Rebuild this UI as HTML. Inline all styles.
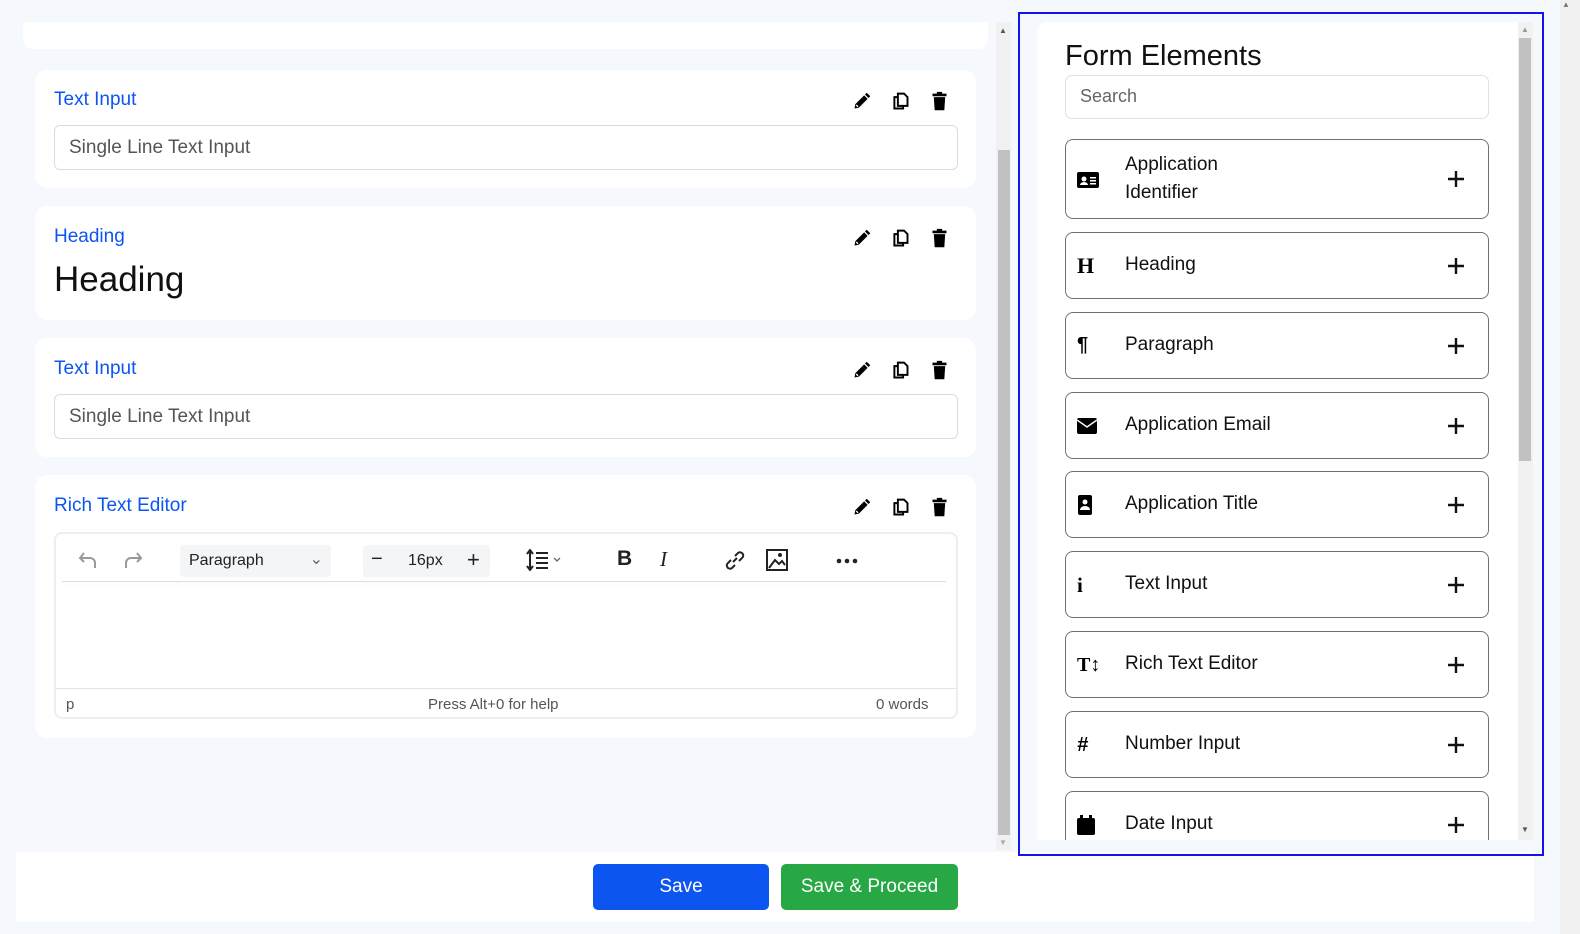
<!DOCTYPE html>
<html><head><meta charset="utf-8"><style>
*{box-sizing:border-box;margin:0;padding:0}
body{width:1580px;height:934px;background:#f5f8fc;font-family:"Liberation Sans",sans-serif;position:relative;overflow:hidden}
.abs{position:absolute}
.card{position:absolute;left:35px;width:941px;background:#fff;border-radius:12px}
.lbl{position:absolute;left:19px;color:#0d55f0;font-size:19px}
.inp{position:absolute;left:19px;width:904px;height:45px;border:1px solid #d9dbe0;border-radius:6px;font-size:19px;color:#555;padding:11px 14px}
.icons{position:absolute;right:26px;display:flex;gap:18px;align-items:center}
.icons svg{width:21px;height:21px}
.item{position:absolute;left:1065px;width:424px;border:1px solid #6c727a;border-radius:8px;background:#fff}
.item .t{position:absolute;left:59px;font-size:19px;color:#111;line-height:28px}
.item .ic{position:absolute;left:11px;width:24px;height:22px;display:flex;align-items:center}
.item .pl{position:absolute;right:24px;width:16px;height:16px}
.tb{font-size:16px;color:#222}
</style></head><body>
<div class="abs" style="left:23px;top:22px;width:965px;height:27px;background:#fff;border-radius:0 0 10px 10px"></div>

<div class="abs" style="left:996px;top:22px;width:15px;height:828px;background:#f1f1f1"></div>
<div class="abs" style="left:998px;top:150px;width:12px;height:685px;background:#c1c1c1"></div>
<div class="abs" style="left:999px;top:26px;font-size:8px;color:#555">▲</div>
<div class="abs" style="left:999px;top:838px;font-size:8px;color:#aaa">▼</div>

<svg width="0" height="0" style="position:absolute">
<defs>
<g id="pen"><path d="M4 20 L5 15 L15 5 L19 9 L9 19 Z" fill="#000"/><path d="M6 16 L8 18" stroke="#fff" stroke-width="1.5"/><path d="M16 4 L18 2 L22 6 L20 8Z" fill="#000"/></g>
<g id="copy"><path d="M9 3 h7 l4 4 v10 h-11z" fill="none" stroke="#000" stroke-width="2.2"/><path d="M9 7 h-4 v13 h10 v-3" fill="none" stroke="#000" stroke-width="2.2"/></g>
<g id="trash"><rect x="4" y="3" width="16" height="3" fill="#000"/><rect x="9" y="1" width="6" height="3" fill="#000"/><path d="M5.5 7 h13 l-1 15 h-11z" fill="#000"/></g>
<g id="plus"><path d="M8 0 V16 M0 8 H16" stroke="#111" stroke-width="2.4"/></g>
</defs></svg>

<div class="card" style="top:70px;height:118px">
  <div class="lbl" style="top:19px">Text Input</div>
  <div class="icons" style="top:21px"><svg viewBox="0 0 24 24"><use href="#pen"/></svg><svg viewBox="0 0 24 24"><use href="#copy"/></svg><svg viewBox="0 0 24 24"><use href="#trash"/></svg></div>
  <div class="inp" style="top:55px">Single Line Text Input</div>
</div>
<div class="card" style="top:206px;height:114px">
  <div class="lbl" style="top:20px">Heading</div>
  <div class="icons" style="top:22px"><svg viewBox="0 0 24 24"><use href="#pen"/></svg><svg viewBox="0 0 24 24"><use href="#copy"/></svg><svg viewBox="0 0 24 24"><use href="#trash"/></svg></div>
  <div class="abs" style="left:19px;top:54px;font-size:35px;color:#111">Heading</div>
</div>
<div class="card" style="top:338px;height:119px">
  <div class="lbl" style="top:20px">Text Input</div>
  <div class="icons" style="top:22px"><svg viewBox="0 0 24 24"><use href="#pen"/></svg><svg viewBox="0 0 24 24"><use href="#copy"/></svg><svg viewBox="0 0 24 24"><use href="#trash"/></svg></div>
  <div class="inp" style="top:56px">Single Line Text Input</div>
</div>
<div class="card" style="top:475px;height:263px">
  <div class="lbl" style="top:20px">Rich Text Editor</div>
  <div class="icons" style="top:22px"><svg viewBox="0 0 24 24"><use href="#pen"/></svg><svg viewBox="0 0 24 24"><use href="#copy"/></svg><svg viewBox="0 0 24 24"><use href="#trash"/></svg></div>
  <div class="abs" style="left:19px;top:57px;width:904px;height:187px;border:2px solid #eceef0;border-radius:8px">
    <div class="abs" style="left:6px;top:47px;width:884px;height:1px;background:#ddd;box-shadow:0 3px 6px rgba(0,0,0,.08)"></div>
    <svg class="abs" style="left:22px;top:15px" width="22" height="22" viewBox="0 0 22 22"><path d="M6 4 L2 9 L6 13 M2 9 H12 a5 5 0 0 1 5 5 v5" fill="none" stroke="#999" stroke-width="2"/></svg>
    <svg class="abs" style="left:65px;top:15px" width="22" height="22" viewBox="0 0 22 22"><path d="M16 4 L20 9 L16 13 M20 9 H10 a5 5 0 0 0 -5 5 v5" fill="none" stroke="#999" stroke-width="2"/></svg>
    <div class="abs tb" style="left:124px;top:11px;width:151px;height:32px;background:#f4f5f6;border-radius:4px;padding:7px 9px">Paragraph<span style="position:absolute;right:8px;top:4px;color:#666">⌄</span></div>
    <div class="abs tb" style="left:307px;top:11px;width:127px;height:32px;background:#f4f5f6;border-radius:4px"><span class="abs" style="left:8px;top:3px;font-size:20px">−</span><span class="abs" style="left:45px;top:7px">16px</span><span class="abs" style="left:104px;top:2px;font-size:22px">+</span></div>
    <svg class="abs" style="left:470px;top:15px" width="40" height="22" viewBox="0 0 40 22"><path d="M4 2 V20 M1 5 L4 1 L7 5 M1 17 L4 21 L7 17" fill="none" stroke="#222" stroke-width="2"/><path d="M10 4 H22 M10 9 H22 M10 14 H22 M10 19 H22" stroke="#222" stroke-width="2"/><path d="M28 9 L31 12 L34 9" fill="none" stroke="#666" stroke-width="1.3"/></svg>
    <div class="abs" style="left:561px;top:13px;font-size:21px;font-weight:bold;color:#222">B</div>
    <div class="abs" style="left:604px;top:13px;font-size:21px;font-style:italic;font-family:'Liberation Serif',serif;color:#222">I</div>
    <svg class="abs" style="left:668px;top:15px" width="22" height="24" viewBox="0 0 22 24"><path d="M9 13 L13 9 M7 11 L4 14 a3 3 0 0 0 4 5 L11 16 M15 12 L18 9 a3 3 0 0 0 -4 -5 L11 7" fill="none" stroke="#222" stroke-width="2"/></svg>
    <svg class="abs" style="left:710px;top:15px" width="22" height="22" viewBox="0 0 22 22"><rect x="1" y="1" width="20" height="20" fill="none" stroke="#222" stroke-width="2"/><path d="M3 19 L9 11 L13 15 L16 12 L19 16" fill="none" stroke="#222" stroke-width="2"/><circle cx="14" cy="6" r="2" fill="#222"/></svg>
    <svg class="abs" style="left:780px;top:24px" width="22" height="6" viewBox="0 0 22 6"><circle cx="3" cy="3" r="2.3" fill="#222"/><circle cx="11" cy="3" r="2.3" fill="#222"/><circle cx="19" cy="3" r="2.3" fill="#222"/></svg>
    <div class="abs" style="left:0;top:154px;width:900px;height:1px;background:#e2e3e5"></div>
    <div class="abs" style="left:10px;top:162px;font-size:15px;color:#555">p</div>
    <div class="abs" style="left:372px;top:162px;font-size:15px;color:#555">Press Alt+0 for help</div>
    <div class="abs" style="left:820px;top:162px;font-size:15px;color:#555">0 words</div>
  </div>
</div>

<div class="abs" style="left:16px;top:852px;width:1518px;height:70px;background:#fff"></div>
<div class="abs" style="left:593px;top:864px;width:176px;height:46px;background:#0d55f0;border-radius:5px;color:#fff;font-size:19px;text-align:center;line-height:46px">Save</div>
<div class="abs" style="left:781px;top:864px;width:177px;height:46px;background:#28a745;border-radius:5px;color:#fff;font-size:19px;text-align:center;line-height:46px">Save &amp; Proceed</div>

<div class="abs" style="left:1560px;top:0;width:20px;height:934px;background:#f1f1f1"></div>
<div class="abs" style="left:1562px;top:0;font-size:8px;color:#777">▲</div>

<div class="abs" style="left:1018px;top:12px;width:526px;height:844px;border:2px solid #1414ea"></div>
<div class="abs" style="left:1037px;top:22px;width:496px;height:818px;background:#fff;border-radius:10px 0 0 0;overflow:hidden">
  <div class="abs" style="left:481px;top:0;width:15px;height:818px;background:#f1f1f1"></div>
  <div class="abs" style="left:482px;top:16px;width:12px;height:423px;background:#c1c1c1"></div>
  <div class="abs" style="left:484px;top:3px;font-size:8px;color:#999">▲</div>
  <div class="abs" style="left:484px;top:803px;font-size:8px;color:#555">▼</div>
</div>
<div class="abs" style="left:1065px;top:40px;font-size:29px;color:#111">Form Elements</div>
<div class="abs" style="left:1065px;top:75px;width:424px;height:44px;border:1px solid #dfe1e4;border-radius:7px;font-size:18px;color:#666;padding:10px 14px">Search</div>

<div class="item" style="top:139px;height:80px"><div class="ic" style="top:29px"><svg width="22" height="18" viewBox="0 0 22 18"><rect x="0" y="1" width="22" height="16" rx="2" fill="#000"/><circle cx="7" cy="8" r="2.5" fill="#fff"/><path d="M3 14 a4 3 0 0 1 8 0z" fill="#fff"/><rect x="13" y="6" width="6" height="1.5" fill="#fff"/><rect x="13" y="9" width="6" height="1.5" fill="#fff"/><rect x="13" y="12" width="6" height="1.5" fill="#fff"/></svg></div><div class="t" style="top:11px">Application<br>Identifier</div><svg class="pl" style="top:31px" viewBox="0 0 16 16"><use href="#plus"/></svg></div>
<div class="item" style="top:232px;height:67px"><div class="ic" style="top:22px;font-family:'Liberation Serif',serif;font-weight:bold;font-size:22px">H</div><div class="t" style="top:18px">Heading</div><svg class="pl" style="top:25px" viewBox="0 0 16 16"><use href="#plus"/></svg></div>
<div class="item" style="top:312px;height:67px"><div class="ic" style="top:21px;font-weight:bold;font-size:20px">¶</div><div class="t" style="top:18px">Paragraph</div><svg class="pl" style="top:25px" viewBox="0 0 16 16"><use href="#plus"/></svg></div>
<div class="item" style="top:392px;height:67px"><div class="ic" style="top:22px"><svg width="20" height="16" viewBox="0 0 20 16"><rect x="0" y="0" width="20" height="16" rx="2" fill="#000"/><path d="M0 2 L10 9 L20 2" fill="none" stroke="#fff" stroke-width="1.5"/></svg></div><div class="t" style="top:18px">Application Email</div><svg class="pl" style="top:25px" viewBox="0 0 16 16"><use href="#plus"/></svg></div>
<div class="item" style="top:471px;height:67px"><div class="ic" style="top:22px"><svg width="16" height="20" viewBox="0 0 16 20"><rect x="1" y="0" width="14" height="20" rx="2" fill="#000"/><circle cx="8" cy="7" r="2.5" fill="#fff"/><path d="M3 15 a5 4 0 0 1 10 0z" fill="#fff"/></svg></div><div class="t" style="top:18px">Application Title</div><svg class="pl" style="top:25px" viewBox="0 0 16 16"><use href="#plus"/></svg></div>
<div class="item" style="top:551px;height:67px"><div class="ic" style="top:22px;font-family:'Liberation Serif',serif;font-weight:bold;font-size:21px">i</div><div class="t" style="top:18px">Text Input</div><svg class="pl" style="top:25px" viewBox="0 0 16 16"><use href="#plus"/></svg></div>
<div class="item" style="top:631px;height:67px"><div class="ic" style="top:22px;font-family:'Liberation Serif',serif;font-weight:bold;font-size:20px">T↕</div><div class="t" style="top:18px">Rich Text Editor</div><svg class="pl" style="top:25px" viewBox="0 0 16 16"><use href="#plus"/></svg></div>
<div class="item" style="top:711px;height:67px"><div class="ic" style="top:22px;font-weight:bold;font-size:20px;font-style:italic">#</div><div class="t" style="top:18px">Number Input</div><svg class="pl" style="top:25px" viewBox="0 0 16 16"><use href="#plus"/></svg></div>
<div class="item" style="top:791px;height:60px;border-bottom:none;border-radius:8px 8px 0 0;clip-path:inset(0 0 11px 0)"><div class="ic" style="top:22px"><svg width="18" height="20" viewBox="0 0 18 20"><rect x="0" y="3" width="18" height="17" rx="2" fill="#000"/><rect x="3" y="0" width="3" height="5" fill="#000"/><rect x="12" y="0" width="3" height="5" fill="#000"/></svg></div><div class="t" style="top:18px">Date Input</div><svg class="pl" style="top:25px" viewBox="0 0 16 16"><use href="#plus"/></svg></div>
</body></html>
